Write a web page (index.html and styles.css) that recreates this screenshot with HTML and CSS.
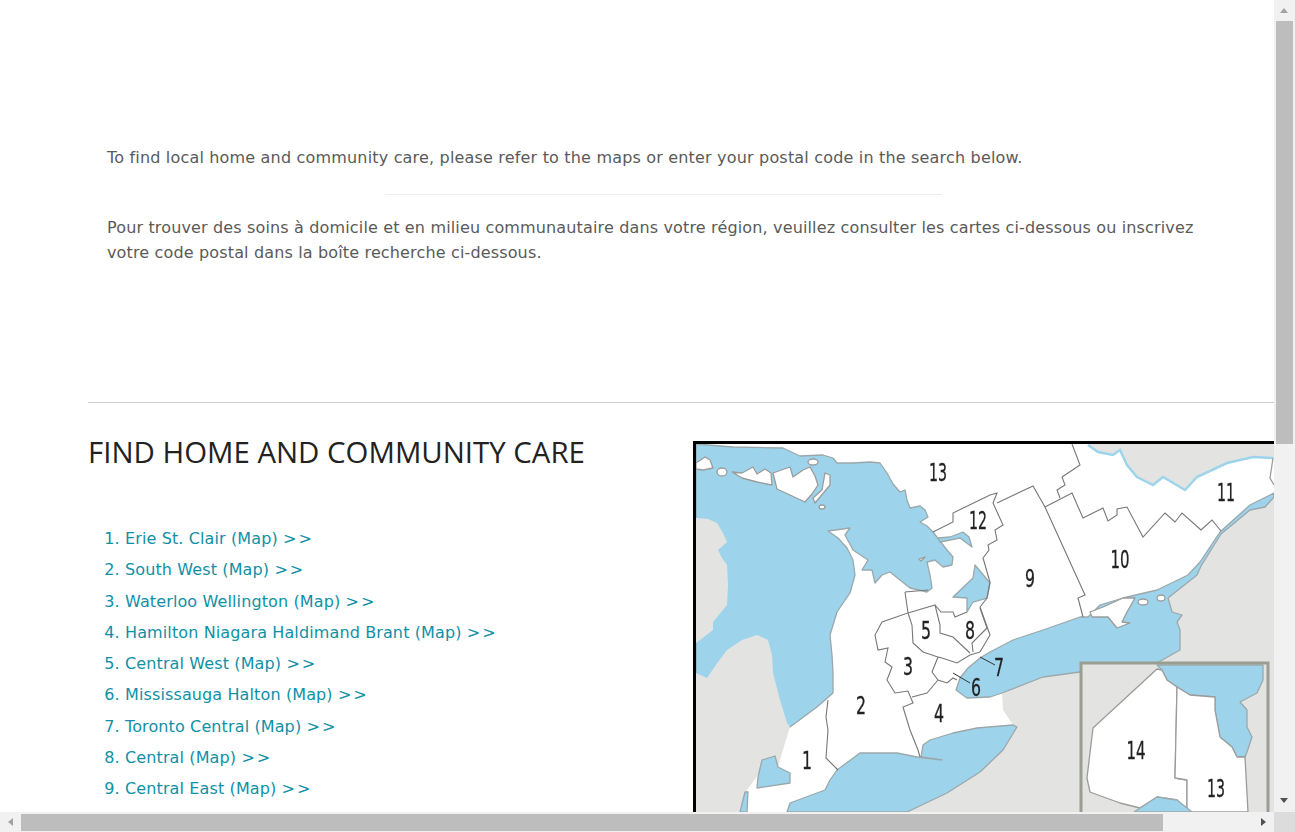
FILE: index.html
```html
<!DOCTYPE html>
<html lang="en">
<head>
<meta charset="utf-8">
<title>Find Home and Community Care</title>
<link rel="stylesheet" href="styles.css">
</head>
<body>
<div class="window">
  <div class="upper">
    <main class="content">
      <section class="intro">
        <p>To find local home and community care, please refer to the maps or enter your postal code in the search below.</p>
        <hr class="intro-rule">
        <p class="intro-fr">Pour trouver des soins à domicile et en milieu communautaire dans votre région, veuillez consulter les cartes ci-dessous ou inscrivez votre code postal dans la boîte recherche ci-dessous.</p>
      </section>
      <section class="finder">
        <div class="finder-left">
          <h1>FIND HOME AND COMMUNITY CARE</h1>
          <ol class="regions">
            <li><a href="#">Erie St. Clair (Map) <span class="chev">&gt;&gt;</span></a></li>
            <li><a href="#">South West (Map) <span class="chev">&gt;&gt;</span></a></li>
            <li><a href="#">Waterloo Wellington (Map) <span class="chev">&gt;&gt;</span></a></li>
            <li><a href="#">Hamilton Niagara Haldimand Brant (Map) <span class="chev">&gt;&gt;</span></a></li>
            <li><a href="#">Central West (Map) <span class="chev">&gt;&gt;</span></a></li>
            <li><a href="#">Mississauga Halton (Map) <span class="chev">&gt;&gt;</span></a></li>
            <li><a href="#">Toronto Central (Map) <span class="chev">&gt;&gt;</span></a></li>
            <li><a href="#">Central (Map) <span class="chev">&gt;&gt;</span></a></li>
            <li><a href="#">Central East (Map) <span class="chev">&gt;&gt;</span></a></li>
          </ol>
        </div>
        <svg class="map" viewBox="693 441 581 371" width="581" height="371" role="img" aria-label="Map of Ontario care regions">
          <rect class="land" x="693" y="441" width="581" height="371"/>
          <!-- Lake Huron and Georgian Bay -->
          <path class="water" d="M696 444 733 447 783 448 800 456 823 455 833 458 837 463 853 463 870 462 880 463 887 473 893 484 900 492 905 490 907 500 910 508 920 506 925 510 928 517 920 522 927 526 933 532 940 541 947 550 953 557 952 565 943 567 935 560 927 562 930 575 932 588 927 592 910 588 900 580 890 572 882 575 875 583 872 570 862 570 868 560 853 550 845 535 850 528 828 531 838 538 847 548 853 560 855 575 850 593 837 612 830 635 832 655 833 673 833 693 817 707 790 727 696 740Z"/>
          <!-- Michigan -->
          <path class="usa" d="M696 518 708 519 717 523 723 533 727 542 718 550 722 558 727 565 728 585 727 605 713 622 713 630 696 643Z"/>
          <path class="usa" d="M696 673 707 678 718 662 727 650 742 640 757 635 768 640 772 655 773 673 780 700 787 723 790 727 785 743 778 767 760 772 747 790 740 812 696 812Z"/>
          <!-- Manitoulin and islands -->
          <path class="land-shore" d="M696 463 705 457 710 460 713 468 703 470 696 469Z"/>
          <ellipse class="land-shore" cx="722" cy="472" rx="5" ry="4"/>
          <path class="land-shore" d="M732 472 742 473 753 467 757 474 765 469 771 473 772 485 757 482 742 478Z"/>
          <path class="land-shore" d="M773 473 790 467 793 477 803 470 810 467 815 476 818 485 812 494 805 502 790 495 777 489Z"/>
          <ellipse class="land-shore" cx="813" cy="462" rx="5" ry="3"/>
          <path class="land-shore" d="M825 473 830 475 830 485 815 503 813 498 822 490Z"/>
          <ellipse class="land-shore" cx="822" cy="507" rx="3" ry="2"/>
          <path class="land-shore" d="M919 559 925 557 921 561Z"/>
          <!-- St Clair and Detroit River -->
          <path class="water" d="M758 777 762 760 775 756 778 767 790 773 790 783 757 788Z"/>
          <path class="water" d="M740 812 745 792 748 792 747 812Z"/>
          <!-- New York state -->
          <path class="usa" d="M907 812 947 793 980 772 1003 750 1017 727 1013 725 1003 710 1002 693 1043 677 1080 672 1157 663 1180 650 1180 630 1172 612 1168 598 1197 575 1200 565 1220 532 1250 510 1265 507 1274 495V812Z"/>
          <path class="usa" d="M1088 444 1098 452 1113 455 1120 450 1127 465 1137 477 1153 485 1163 477 1185 490 1197 477 1227 463 1253 457 1274 458V444Z"/>
          <path class="river" d="M1088 445 1098 452 1113 455 1120 450 1127 465 1137 477 1153 485 1163 477 1185 490 1197 477 1227 463 1253 457 1273 458"/>
          <path class="shore" d="M1273 458 1270 478 1274 485"/>
          <!-- Lake Erie -->
          <path class="water" d="M787 812 790 803 825 790 830 780 837 770 860 753 897 753 917 757 942 760 921 757 923 745 930 740 953 733 977 728 1013 725 1017 727 1003 750 980 772 947 793 907 812Z"/>
          <!-- Lake Ontario -->
          <path class="water" d="M1274 493 1250 505 1220 532 1200 562 1188 575 1157 590 1123 598 1100 605 1088 617 1080 617 1043 630 1013 640 990 652 980 658 968 668 960 678 956 690 967 698 990 697 1002 693 1043 677 1080 672 1157 663 1180 650 1180 630 1177 622 1182 615 1172 612 1168 598 1197 575 1201 566 1221 534 1250 510 1265 507 1274 497Z"/>
          <path class="land-shore" d="M1090 612 1103 607 1123 598 1135 598 1127 612 1122 622 1130 623 1117 628 1108 617 1092 617Z"/>
          <ellipse class="land-shore" cx="1143" cy="602" rx="5" ry="3"/>
          <ellipse class="land-shore" cx="1161" cy="598" rx="4" ry="3"/>
          <!-- Inland lakes -->
          <path class="water" d="M975 565 973 578 953 597 967 598 967 612 973 602 987 598 990 583Z"/>
          <path class="water" d="M938 538 950 537 963 532 969 537 972 547 960 538 940 542Z"/>
          <!-- Region borders -->
          <path class="border" d="M933 532 953 522 953 513 990 495 997 493 993 503 1003 525 995 530 997 540 988 545 989 550 983 558 990 582 987 598 980 607 990 635 980 652"/>
          <path class="border" d="M997 503 1033 486 1045 507 1085 595 1078 598 1083 617"/>
          <path class="border" d="M1072 444 1080 465 1062 477 1065 485 1057 490 1060 498"/>
          <path class="border" d="M1045 507 1072 493 1083 518 1103 508 1108 521 1117 515 1117 509 1127 507 1143 537 1165 513 1175 522 1182 513 1201 530 1212 520 1221 531"/>
          <path class="border" d="M905 592 908 613 882 622 875 635 878 650 888 648 885 662 892 667 887 680 895 693 908 691 913 703 903 707 910 730 918 750 920 757"/>
          <path class="border" d="M905 592 928 590M908 613 935 605 940 625 940 633 953 637 970 653M935 605 941 612 953 612 955 617 967 612M980 608 987 628 972 643 973 652"/>
          <path class="border" d="M908 613 912 625 913 643 923 652 938 657 932 672 938 680 947 683 953 678 957 680M912 697 927 693 938 680M938 657 942 658 957 663 970 655 980 652"/>
          <path class="border" d="M828 700 826 717 828 730 826 758 838 770"/>
          <path class="leader" d="M953 673 970 683M980 657 995 665"/>
          <!-- Inset -->
          <rect class="inset" x="1081" y="663" width="187" height="160"/>
          <path class="water" d="M1157 665H1263V680L1257 693 1240 702 1247 710 1247 727 1252 737 1247 752 1245 757 1237 757 1232 747 1220 737 1215 710 1215 697 1190 695 1177 687 1167 680 1162 670Z"/>
          <path class="land-shore" d="M1157 669 1162 670 1167 680 1177 687 1175 778 1187 780 1187 810 1177 800 1157 797 1140 808 1120 803 1090 792 1087 778 1093 728Z"/>
          <path class="land-shore" d="M1177 687 1190 695 1215 697 1215 710 1220 737 1232 747 1237 757 1245 757 1248 812H1192L1187 810 1187 780 1175 778Z"/>
          <path class="water" d="M1134 812 1140 808 1157 797 1177 800 1192 812Z"/>
          <rect class="inset-frame" x="1081" y="663" width="187" height="160"/>
          <!-- Outer frame -->
          <path class="frame" d="M694.500 812V442.500H1274"/>
          <!-- Labels -->
          <text class="num" x="938" y="481" textLength="18" lengthAdjust="spacingAndGlyphs">13</text>
          <text class="num" x="978" y="529" textLength="18" lengthAdjust="spacingAndGlyphs">12</text>
          <text class="num" x="1226" y="501" textLength="18" lengthAdjust="spacingAndGlyphs">11</text>
          <text class="num" x="1120" y="568" textLength="19" lengthAdjust="spacingAndGlyphs">10</text>
          <text class="num" x="1030" y="587" textLength="10" lengthAdjust="spacingAndGlyphs">9</text>
          <text class="num" x="970" y="639" textLength="10" lengthAdjust="spacingAndGlyphs">8</text>
          <text class="num" x="926" y="639" textLength="10" lengthAdjust="spacingAndGlyphs">5</text>
          <text class="num" x="908" y="675" textLength="10" lengthAdjust="spacingAndGlyphs">3</text>
          <text class="num" x="861" y="714" textLength="10" lengthAdjust="spacingAndGlyphs">2</text>
          <text class="num" x="807" y="769" textLength="10" lengthAdjust="spacingAndGlyphs">1</text>
          <text class="num" x="939" y="722" textLength="10" lengthAdjust="spacingAndGlyphs">4</text>
          <text class="num" x="976" y="696" textLength="10" lengthAdjust="spacingAndGlyphs">6</text>
          <text class="num" x="999" y="676" textLength="10" lengthAdjust="spacingAndGlyphs">7</text>
          <text class="num" x="1136" y="759" textLength="19" lengthAdjust="spacingAndGlyphs">14</text>
          <text class="num" x="1216" y="797" textLength="18" lengthAdjust="spacingAndGlyphs">13</text>
        </svg>
      </section>
    </main>
    <div class="vbar">
      <span class="arrow arrow-up"></span>
      <span class="vthumb"></span>
      <span class="arrow arrow-down"></span>
    </div>
  </div>
  <div class="hbar">
    <div class="htrack">
      <span class="arrow arrow-left"></span>
      <span class="hthumb"></span>
      <span class="arrow arrow-right"></span>
    </div>
    <span class="corner"></span>
  </div>
</div>
</body>
</html>
```

FILE: styles.css
```css
* { box-sizing: border-box; }
html, body { margin: 0; height: 100%; overflow: hidden; background: #fff; }
.window { width: 1295px; height: 832px; display: flex; flex-direction: column; font-family: "DejaVu Sans", sans-serif; }
.upper { display: flex; height: 812px; }
.content { width: 1274px; height: 812px; padding-left: 88px; overflow: hidden; }

.intro { padding: 145px 65px 0 19px; height: 402px; color: #5a5a5a; font-size: 16px; line-height: 25px; letter-spacing: 0.180px; }
.intro p { margin: 0; }
.intro-fr { letter-spacing: 0.150px; }
.intro-rule { width: 557px; height: 1px; margin: 24px 0 20px 278px; border: 0; background: #eee; }

.finder { display: flex; border-top: 1px solid #ccc; }
.finder-left { width: 605px; flex: none; }
h1 { margin: 28px 0 0; font-family: "Open Sans", sans-serif; font-size: 29.400px; line-height: 42px; font-weight: 400; color: #222; white-space: nowrap; }
.regions { margin: 50px 0 0; padding: 0 0 0 37px; color: #1090a6; font-size: 16px; line-height: 31.250px; letter-spacing: 0.120px; }
.regions a { color: inherit; text-decoration: none; }
.chev { letter-spacing: 2px; }

.map { flex: none; margin-top: 38px; filter: blur(0.45px); }
.land { fill: #fff; }
.water { fill: #9dd4ec; stroke: #9aa8ab; stroke-width: 1.300; stroke-linejoin: round; }
.usa { fill: #e3e4e2; }
.land-shore { fill: #fff; stroke: #9a9c9a; stroke-width: 1.300; stroke-linejoin: round; }
.river { fill: none; stroke: #9dd4ec; stroke-width: 2.500; }
.shore { fill: none; stroke: #9a9c9a; stroke-width: 1.300; }
.border { fill: none; stroke: #777; stroke-width: 1.100; stroke-linejoin: miter; }
.leader { fill: none; stroke: #333; stroke-width: 1; }
.inset { fill: #e3e4e2; }
.inset-frame { fill: none; stroke: #9a9d92; stroke-width: 3; }
.frame { fill: none; stroke: #000; stroke-width: 3; }
.num { font-family: "DejaVu Sans Condensed", "DejaVu Sans", sans-serif; font-size: 24px; fill: #222; stroke: #222; stroke-width: 0.300; text-anchor: middle; }

.vbar { position: relative; width: 21px; height: 812px; background: #f1f1f1; }
.vthumb { position: absolute; left: 2px; top: 21px; width: 17px; height: 423px; background: #bdbdbd; }
.hbar { display: flex; height: 20px; }
.htrack { position: relative; flex: 1; background: #f1f1f1; }
.hthumb { position: absolute; left: 21px; top: 2px; width: 1142px; height: 17px; background: #bdbdbd; }
.corner { width: 21px; background: #dcdcdc; }

.arrow { position: absolute; width: 0; height: 0; border-style: solid; border-color: transparent; }
.arrow-up { left: 6px; top: 8px; border-width: 0 4.500px 5px; border-bottom-color: #a3a3a3; }
.arrow-down { left: 6px; top: 798px; border-width: 5px 4.500px 0; border-top-color: #505050; }
.arrow-left { left: 8px; top: 6px; border-width: 4.500px 5px 4.500px 0; border-right-color: #a3a3a3; }
.arrow-right { left: 1261px; top: 6px; border-width: 4.500px 0 4.500px 5px; border-left-color: #505050; }
```
